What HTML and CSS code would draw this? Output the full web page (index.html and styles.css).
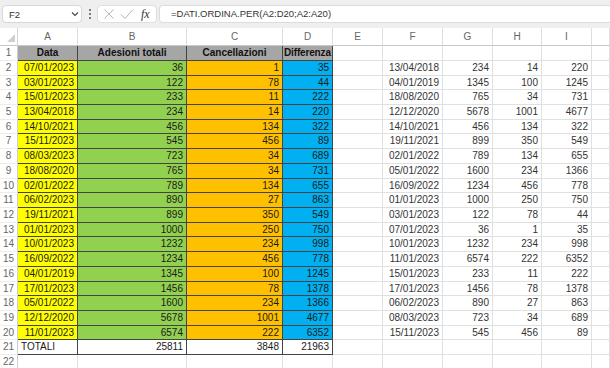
FILE: index.html
```html
<!DOCTYPE html>
<html lang="it">
<head>
<meta charset="utf-8">
<title>Excel - DATI.ORDINA.PER</title>
<link rel="stylesheet" href="styles.css">
</head>
<body>
<div class="bar">
  <div class="namebox"><span>F2</span>
    <svg class="chev" width="8" height="6" viewBox="0 0 8 6"><path d="M1 1.5l3 3 3-3" fill="none" stroke="#444" stroke-width="1.1"/></svg>
  </div>
  <div class="dots"><svg width="4" height="12" viewBox="0 0 4 12"><circle cx="2" cy="2" r="1" fill="#555"/><circle cx="2" cy="6" r="1" fill="#555"/><circle cx="2" cy="10" r="1" fill="#555"/></svg></div>
  <div class="fxbox">
    <svg width="12" height="12" viewBox="0 0 12 12"><path d="M1.5 1.5l9 9M10.5 1.5l-9 9" stroke="#b4b4b4" stroke-width="1" fill="none"/></svg>
    <svg width="14" height="12" viewBox="0 0 14 12"><path d="M1 6.5l4 4 8-9" stroke="#b4b4b4" stroke-width="1" fill="none"/></svg>
    <span class="fx">fx</span>
  </div>
  <div class="formula">=DATI.ORDINA.PER(A2:D20;A2:A20)</div>
</div>
<div class="sheet">
  <div class="row head"><span class="corner"></span><span class="ch">A</span><span class="ch">B</span><span class="ch">C</span><span class="ch">D</span><span class="ch">E</span><span class="ch">F</span><span class="ch">G</span><span class="ch">H</span><span class="ch">I</span><span class="ch"></span></div>
  <div class="row"><span class="rn">1</span><span class="c t h">Data</span><span class="c t h">Adesioni totali</span><span class="c t h">Cancellazioni</span><span class="c t h hl">Differenza</span><span class="c"></span><span class="c"></span><span class="c"></span><span class="c"></span><span class="c"></span><span class="c"></span></div>
  <div class="row"><span class="rn">2</span><span class="c t y">07/01/2023</span><span class="c t g">36</span><span class="c t o">1</span><span class="c t b">35</span><span class="c"></span><span class="c">13/04/2018</span><span class="c">234</span><span class="c">14</span><span class="c">220</span><span class="c"></span></div>
  <div class="row s"><span class="rn">3</span><span class="c t y">03/01/2023</span><span class="c t g">122</span><span class="c t o">78</span><span class="c t b">44</span><span class="c"></span><span class="c">04/01/2019</span><span class="c">1345</span><span class="c">100</span><span class="c">1245</span><span class="c"></span></div>
  <div class="row"><span class="rn">4</span><span class="c t y">15/01/2023</span><span class="c t g">233</span><span class="c t o">11</span><span class="c t b">222</span><span class="c"></span><span class="c">18/08/2020</span><span class="c">765</span><span class="c">34</span><span class="c">731</span><span class="c"></span></div>
  <div class="row"><span class="rn">5</span><span class="c t y">13/04/2018</span><span class="c t g">234</span><span class="c t o">14</span><span class="c t b">220</span><span class="c"></span><span class="c">12/12/2020</span><span class="c">5678</span><span class="c">1001</span><span class="c">4677</span><span class="c"></span></div>
  <div class="row s"><span class="rn">6</span><span class="c t y">14/10/2021</span><span class="c t g">456</span><span class="c t o">134</span><span class="c t b">322</span><span class="c"></span><span class="c">14/10/2021</span><span class="c">456</span><span class="c">134</span><span class="c">322</span><span class="c"></span></div>
  <div class="row"><span class="rn">7</span><span class="c t y">15/11/2023</span><span class="c t g">545</span><span class="c t o">456</span><span class="c t b">89</span><span class="c"></span><span class="c">19/11/2021</span><span class="c">899</span><span class="c">350</span><span class="c">549</span><span class="c"></span></div>
  <div class="row"><span class="rn">8</span><span class="c t y">08/03/2023</span><span class="c t g">723</span><span class="c t o">34</span><span class="c t b">689</span><span class="c"></span><span class="c">02/01/2022</span><span class="c">789</span><span class="c">134</span><span class="c">655</span><span class="c"></span></div>
  <div class="row"><span class="rn">9</span><span class="c t y">18/08/2020</span><span class="c t g">765</span><span class="c t o">34</span><span class="c t b">731</span><span class="c"></span><span class="c">05/01/2022</span><span class="c">1600</span><span class="c">234</span><span class="c">1366</span><span class="c"></span></div>
  <div class="row s"><span class="rn">10</span><span class="c t y">02/01/2022</span><span class="c t g">789</span><span class="c t o">134</span><span class="c t b">655</span><span class="c"></span><span class="c">16/09/2022</span><span class="c">1234</span><span class="c">456</span><span class="c">778</span><span class="c"></span></div>
  <div class="row"><span class="rn">11</span><span class="c t y">06/02/2023</span><span class="c t g">890</span><span class="c t o">27</span><span class="c t b">863</span><span class="c"></span><span class="c">01/01/2023</span><span class="c">1000</span><span class="c">250</span><span class="c">750</span><span class="c"></span></div>
  <div class="row"><span class="rn">12</span><span class="c t y">19/11/2021</span><span class="c t g">899</span><span class="c t o">350</span><span class="c t b">549</span><span class="c"></span><span class="c">03/01/2023</span><span class="c">122</span><span class="c">78</span><span class="c">44</span><span class="c"></span></div>
  <div class="row s"><span class="rn">13</span><span class="c t y">01/01/2023</span><span class="c t g">1000</span><span class="c t o">250</span><span class="c t b">750</span><span class="c"></span><span class="c">07/01/2023</span><span class="c">36</span><span class="c">1</span><span class="c">35</span><span class="c"></span></div>
  <div class="row"><span class="rn">14</span><span class="c t y">10/01/2023</span><span class="c t g">1232</span><span class="c t o">234</span><span class="c t b">998</span><span class="c"></span><span class="c">10/01/2023</span><span class="c">1232</span><span class="c">234</span><span class="c">998</span><span class="c"></span></div>
  <div class="row"><span class="rn">15</span><span class="c t y">16/09/2022</span><span class="c t g">1234</span><span class="c t o">456</span><span class="c t b">778</span><span class="c"></span><span class="c">11/01/2023</span><span class="c">6574</span><span class="c">222</span><span class="c">6352</span><span class="c"></span></div>
  <div class="row"><span class="rn">16</span><span class="c t y">04/01/2019</span><span class="c t g">1345</span><span class="c t o">100</span><span class="c t b">1245</span><span class="c"></span><span class="c">15/01/2023</span><span class="c">233</span><span class="c">11</span><span class="c">222</span><span class="c"></span></div>
  <div class="row s"><span class="rn">17</span><span class="c t y">17/01/2023</span><span class="c t g">1456</span><span class="c t o">78</span><span class="c t b">1378</span><span class="c"></span><span class="c">17/01/2023</span><span class="c">1456</span><span class="c">78</span><span class="c">1378</span><span class="c"></span></div>
  <div class="row"><span class="rn">18</span><span class="c t y">05/01/2022</span><span class="c t g">1600</span><span class="c t o">234</span><span class="c t b">1366</span><span class="c"></span><span class="c">06/02/2023</span><span class="c">890</span><span class="c">27</span><span class="c">863</span><span class="c"></span></div>
  <div class="row"><span class="rn">19</span><span class="c t y">12/12/2020</span><span class="c t g">5678</span><span class="c t o">1001</span><span class="c t b">4677</span><span class="c"></span><span class="c">08/03/2023</span><span class="c">723</span><span class="c">34</span><span class="c">689</span><span class="c"></span></div>
  <div class="row s"><span class="rn">20</span><span class="c t y">11/01/2023</span><span class="c t g">6574</span><span class="c t o">222</span><span class="c t b">6352</span><span class="c"></span><span class="c">15/11/2023</span><span class="c">545</span><span class="c">456</span><span class="c">89</span><span class="c"></span></div>
  <div class="row"><span class="rn">21</span><span class="c t left">TOTALI</span><span class="c t">25811</span><span class="c t">3848</span><span class="c t">21963</span><span class="c"></span><span class="c"></span><span class="c"></span><span class="c"></span><span class="c"></span><span class="c"></span></div>
  <div class="row"><span class="rn">22</span><span class="c"></span><span class="c"></span><span class="c"></span><span class="c"></span><span class="c"></span><span class="c"></span><span class="c"></span><span class="c"></span><span class="c"></span><span class="c"></span></div>
</div>
</body>
</html>
```
FILE: styles.css
```css
html, body {
  margin: 0;
  padding: 0;
}
body {
  width: 610px;
  height: 368px;
  overflow: hidden;
  background: #ffffff;
  font-family: "Liberation Sans", Arial, sans-serif;
  color: #222;
}

/* formula bar */
.bar {
  height: 28px;
  background: #efefef;
  display: flex;
  align-items: center;
  padding-left: 2px;
  box-sizing: border-box;
}
.namebox {
  width: 80px;
  height: 18px;
  box-sizing: border-box;
  background: #fff;
  border: 1px solid #d8d8d8;
  border-radius: 4px;
  display: flex;
  align-items: center;
  justify-content: space-between;
  padding: 0 2px 0 6px;
  font-size: 9.5px;
  color: #333;
}
.dots {
  width: 15px;
  display: flex;
  justify-content: center;
  align-items: center;
}
.fxbox {
  width: 60px;
  height: 18px;
  box-sizing: border-box;
  background: #fff;
  border: 1px solid #dedede;
  border-radius: 4px;
  display: flex;
  align-items: center;
  gap: 5px;
  padding-left: 5px;
}
.fx {
  font-family: "Liberation Serif", "Times New Roman", serif;
  font-style: italic;
  font-size: 12px;
  color: #333;
  margin-left: 2px;
}
.formula {
  flex: 1;
  height: 18px;
  margin-left: 2px;
  box-sizing: border-box;
  background: #fff;
  border: 1px solid #dcdcdc;
  border-right: none;
  border-radius: 4px 0 0 4px;
  font-size: 9.5px;
  line-height: 16px;
  padding-left: 11px;
  color: #333;
}

/* grid */
.row {
  display: grid;
  grid-template-columns: 18px 60px 109px 96px 50px 50px 60px 50px 49px 50px 18px;
  height: 15px;
}
.row.s {
  height: 14px;
}
.row.head {
  height: 18px;
}
.corner {
  position: relative;
  border-right: 1px solid #d4d4d4;
  border-bottom: 1px solid #c8c8c8;
}
.corner::after {
  content: "";
  position: absolute;
  right: 2px;
  bottom: 3px;
  border-left: 8px solid transparent;
  border-bottom: 8px solid #cfcfcf;
}
.ch {
  text-align: center;
  color: #666;
  font-size: 10px;
  line-height: 17px;
  border-right: 1px solid #dedede;
  border-bottom: 1px solid #c8c8c8;
}
.rn {
  text-align: center;
  color: #666;
  font-size: 10px;
  line-height: 14px;
  border-right: 1px solid #cfcfcf;
  border-bottom: 1px solid #ececec;
  box-sizing: border-box;
}
.s .rn, .s .c {
  line-height: 13px;
}
.c {
  box-sizing: border-box;
  border-right: 1px solid #e0e0e0;
  border-bottom: 1px solid #e0e0e0;
  font-size: 10px;
  line-height: 14px;
  text-align: right;
  padding-right: 3px;
  white-space: nowrap;
  overflow: hidden;
  color: #333;
}
.t {
  border-right-color: #444;
  border-bottom-color: #444;
  color: #1a1a1a;
}
.h {
  background: #a6a6a6;
  font-weight: bold;
  text-align: center;
  padding: 0;
  color: #111;
}
.hl {
  text-align: left;
  padding-left: 1px;
  letter-spacing: -0.15px;
  overflow: visible;
}
.left {
  text-align: left;
  padding-left: 3px;
}
.y { background: #ffff00; }
.g { background: #92d050; }
.o { background: #ffc000; }
.b { background: #00b0f0; }
```
